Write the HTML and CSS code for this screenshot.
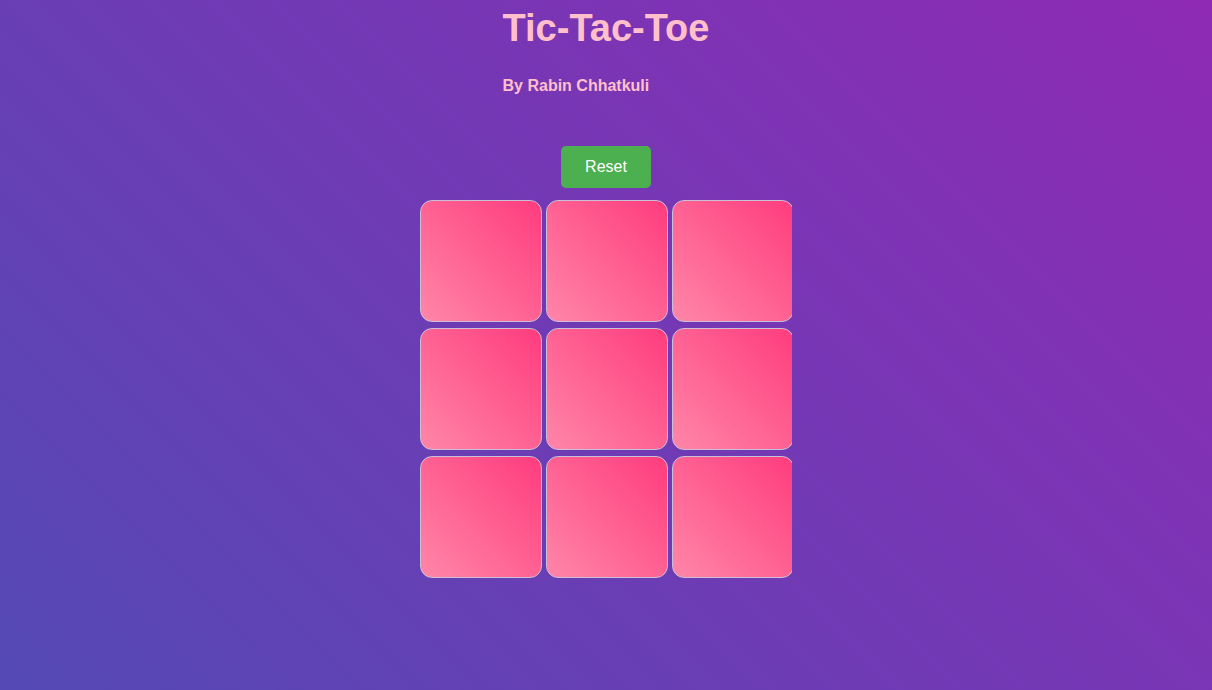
FILE: index.html
```html
<!DOCTYPE html>
<html lang="en">
<head>
<meta charset="utf-8">
<title>Tic-Tac-Toe</title>
<link rel="stylesheet" href="styles.css">
</head>
<body>
  <header class="header">
    <h1 class="title">Tic-Tac-Toe</h1>
    <p class="author">By Rabin Chhatkuli</p>
  </header>
  <main class="game">
    <button class="reset" type="button">Reset</button>
    <div class="board">
      <div class="grid">
        <div class="cell"></div>
        <div class="cell"></div>
        <div class="cell"></div>
        <div class="cell"></div>
        <div class="cell"></div>
        <div class="cell"></div>
        <div class="cell"></div>
        <div class="cell"></div>
        <div class="cell"></div>
      </div>
    </div>
  </main>
</body>
</html>
```
FILE: styles.css
```css
html, body {
  margin: 0;
  padding: 0;
  height: 100%;
}

body {
  font-family: "Liberation Sans", Arial, sans-serif;
  background: linear-gradient(45deg, #5449b5, #8e2ab4);
  overflow: hidden;
}

.header {
  width: fit-content;
  margin: 0 auto;
  padding-top: 8px;
  text-align: left;
}

.title {
  margin: 0 0 29px;
  font-size: 38px;
  line-height: 40px;
  font-weight: bold;
  color: #ffc0cb;
}

.author {
  margin: 0;
  font-size: 16px;
  line-height: 18px;
  font-weight: bold;
  color: #ffc0cb;
}

.game {
  display: flex;
  flex-direction: column;
  align-items: center;
  padding-top: 51px;
}

.reset {
  font-family: "Liberation Sans", Arial, sans-serif;
  font-size: 16px;
  line-height: 18px;
  padding: 12px 24px;
  color: #ffffff;
  background: #4caf50;
  border: none;
  border-radius: 5px;
  cursor: pointer;
}

.board {
  width: 372px;
  margin-top: 12px;
  overflow: hidden;
}

.grid {
  display: grid;
  grid-template-columns: repeat(3, 122px);
  grid-auto-rows: 122px;
  column-gap: 4px;
  row-gap: 6px;
  width: 374px;
}

.cell {
  box-sizing: border-box;
  border: 1px solid #c9bfd6;
  border-radius: 12px;
  background: linear-gradient(45deg, #ff86a8, #ff3c7e);
}
```
